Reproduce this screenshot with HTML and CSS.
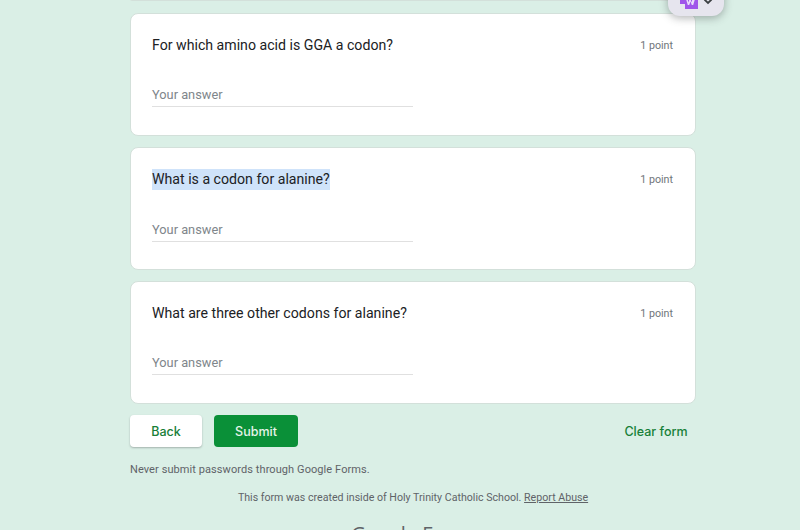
FILE: index.html
```html
<!DOCTYPE html>
<html lang="en">
<head>
<meta charset="utf-8">
<title>Form</title>
<link rel="stylesheet" href="styles.css">
</head>
<body>
<div class="page">
  <div class="card card-stub"></div>
  <section class="card">
    <div class="q-head"><h2 class="q-title">For which amino acid is GGA a codon?</h2><span class="points">1 point</span></div>
    <div class="answer">Your answer</div>
  </section>
  <section class="card">
    <div class="q-head"><h2 class="q-title"><span class="selected">What is a codon for alanine?</span></h2><span class="points">1 point</span></div>
    <div class="answer">Your answer</div>
  </section>
  <section class="card">
    <div class="q-head"><h2 class="q-title">What are three other codons for alanine?</h2><span class="points">1 point</span></div>
    <div class="answer">Your answer</div>
  </section>
  <div class="actions">
    <button class="btn btn-back">Back</button>
    <button class="btn btn-submit">Submit</button>
    <button class="btn btn-clear">Clear form</button>
  </div>
  <p class="warning">Never submit passwords through Google Forms.</p>
  <p class="origin">This form was created inside of Holy Trinity Catholic School. <a class="abuse" href="#">Report Abuse</a></p>
  <div class="brand">Google Forms</div>
</div>
<div class="float-pill">
  <svg class="pill-icon" width="18" height="12" viewBox="0 0 18 12"><path fill="#a055ea" d="M0 0h18v12H5V7H0z"/><path fill="#e9dcfa" d="M6 2h1.500l1 3.500 1-3.500h1l1 3.500 1-3.500H15l-1.800 6h-1.400l-1.300-3.500L9.200 8H7.800z"/></svg>
  <svg class="pill-chevron" width="10" height="8" viewBox="0 0 10 8"><path d="M1.500 1.500 5 5l3.500-3.500" fill="none" stroke="#3c4043" stroke-width="1.800"/></svg>
</div>
</body>
</html>
```
FILE: styles.css
```css
* { box-sizing: border-box; }
html, body { margin: 0; height: 530px; overflow: hidden; }
body { background: #daefe6; font-family: Roboto, "Liberation Sans", sans-serif; position: relative; }
.page { width: 566px; margin-left: 130px; display: flex; flex-direction: column; }
.card {
  background: #fff;
  border: 1px solid #d3e0da;
  border-radius: 8px;
  height: 123px;
  margin-bottom: 11.200px;
  padding: 21px 21px 0;
}
.card-stub { height: 2px; margin-top: -1px; margin-bottom: 12px; border-radius: 0 0 8px 8px; border-top: 0; padding: 0; }
.q-head { display: flex; justify-content: space-between; align-items: flex-start; }
.q-title { margin: 0; font-size: 14.150px; font-weight: 400; line-height: 20px; color: #202124; }
.selected { background: #cfe3fa; display: inline-block; margin-top: -1px; padding: 1px 0; line-height: 19px; }
.points { font-size: 10.700px; line-height: 18px; color: #70757a; margin-top: 2px; margin-right: 1px; }
.answer {
  width: 261px;
  margin-top: 30px;
  height: 22px;
  border-bottom: 1px solid #e0e0e0;
  font-size: 12.800px;
  line-height: 20px;
  color: #80868b;
}
.actions { display: flex; align-items: center; gap: 12px; height: 32px; margin-top: -.4px; }
.btn { font-family: Inter, Roboto, sans-serif; font-size: 12.500px; font-weight: 500; border: 0; border-radius: 4px; height: 32px; padding: 0; }
.btn-back { width: 72px; background: #fff; color: #188038; box-shadow: 0 1px 2px rgba(60,64,67,.35); }
.btn-submit { width: 84px; background: #0a9038; color: #e6f4ea; }
.btn-clear { margin-left: auto; width: 80px; background: none; color: #188038; }
.warning { margin: 15px 0 0; font-size: 11px; line-height: 16px; color: #5f6368; letter-spacing: .08px; }
.origin { margin: 12px 0 0; font-size: 10.640px; line-height: 16px; color: #5f6368; text-align: center; }
.abuse { color: #5f6368; }
.brand { margin-top: 13px; padding-left: 6px; font-family: "Open Sans", sans-serif; font-size: 20px; line-height: 30px; color: #5f6368; text-align: center; }
.float-pill {
  position: absolute; left: 668px; top: -24px; width: 56px; height: 40px;
  background: #e6e5ee; border-radius: 0 0 12px 12px;
  box-shadow: 0 2px 8px rgba(60,64,67,.4);
  display: flex; align-items: flex-end; gap: 5px; padding: 0 0 7px 12px;
}
.pill-icon, .pill-chevron { display: block; }
.pill-chevron { margin-bottom: 3px; }
```
